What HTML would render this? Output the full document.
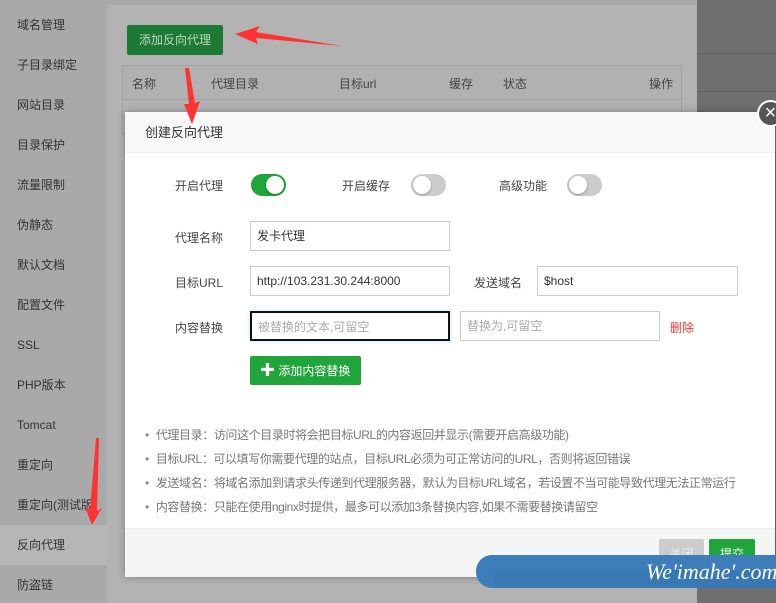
<!DOCTYPE html>
<html><head><meta charset="utf-8"><style>
*{margin:0;padding:0;box-sizing:border-box}
body{width:776px;height:603px;overflow:hidden;position:relative;background:#b3b3b3;font-family:"Liberation Sans","Noto Sans CJK SC",sans-serif;font-size:12px;color:#333}
.side{position:absolute;left:0;top:0;width:107px;height:603px;background:#a9a9a9}
.side div{position:absolute;left:17px;font-size:12px;color:#333;line-height:16px}
.side .act{left:0;width:107px;height:40px;background:#b6b6b6;padding-left:17px;line-height:40px}
.main{position:absolute;left:107px;top:0;width:590px;height:603px;background:#b3b3b3;border-top:5px solid #aaa}
.right{position:absolute;left:697px;top:0;width:79px;height:603px;background:#6f6f6f}
.right i{position:absolute;left:0;width:79px;height:1px;background:#626262}
.addbtn{position:absolute;left:127px;top:25px;height:30px;background:#1d7a34;color:#b9d9bf;border-radius:2px;font-size:12px;line-height:30px;text-align:center;width:96px}
.tbl{position:absolute;left:122px;top:65px;width:560px;height:70px;border:1px solid #a3a3a3}
.tbl .h{height:34px;border-bottom:1px solid #a3a3a3;position:relative;background:#b1b1b1}
.tbl .h span{position:absolute;top:9px;color:#444}
.modal{position:absolute;left:125px;top:112px;width:650px;height:465px;background:#fff;box-shadow:0 0 8px rgba(0,0,0,.3)}
.mh{height:41px;background:#f8f8f8;border-bottom:1px solid #eee;padding-left:20px;line-height:41px;font-size:13px;color:#333}
.mf{position:absolute;left:0;top:416px;width:650px;height:49px;background:#f4f5f5;border-top:1px solid #eee}
.lbl{position:absolute;font-size:12px;color:#444}
.sw{position:absolute;width:35px;height:22px;border-radius:11px;background:#ccc}
.sw:after{content:"";position:absolute;top:2px;left:2px;width:18px;height:18px;border-radius:50%;background:#fff;box-shadow:0 1px 2px rgba(0,0,0,.3)}
.sw.on{background:#20a53a}.sw.on:after{left:15px}
.in{position:absolute;height:30px;border:1px solid #ccc;padding-left:6px;line-height:28px;font-size:12px;color:#333}
.ph{color:#aaa}
.close{position:absolute;left:757px;top:100px;width:27px;height:27px;border-radius:50%;background:#555;border:2px solid #fff;color:#fff;font-size:20px;line-height:22px;text-align:center}
.notes{position:absolute;left:20px;top:311px;font-size:12px;color:#777;line-height:24px;letter-spacing:-0.4px}
.notes div:before{content:"•";color:#888;margin-right:7px}
.wm{position:absolute;left:476px;top:555px;width:300px;height:33px;background:#3c7dba;border-radius:16px 0 0 16px}
.wm2{position:absolute;left:495px;top:570px;width:281px;height:18px;background:#3878b4}
.wmt{position:absolute;left:646px;top:559px;color:#fff;font-family:"Liberation Serif",serif;font-style:italic;font-size:22px}
.arrow{position:absolute}
</style></head><body>
<div class="side">
<div style="top:17px">域名管理</div>
<div style="top:57px">子目录绑定</div>
<div style="top:97px">网站目录</div>
<div style="top:137px">目录保护</div>
<div style="top:177px">流量限制</div>
<div style="top:217px">伪静态</div>
<div style="top:257px">默认文档</div>
<div style="top:297px">配置文件</div>
<div style="top:337px">SSL</div>
<div style="top:377px">PHP版本</div>
<div style="top:417px">Tomcat</div>
<div style="top:457px">重定向</div>
<div style="top:497px">重定向(测试版</div>
<div class="act" style="top:525px">反向代理</div>
<div style="top:577px">防盗链</div>
</div>
<div class="main"></div>
<div class="right"><i style="top:53px"></i><i style="top:91px"></i></div>
<div class="addbtn">添加反向代理</div>
<div class="tbl"><div class="h">
<span style="left:9px">名称</span><span style="left:88px">代理目录</span><span style="left:216px">目标url</span><span style="left:326px">缓存</span><span style="left:380px">状态</span><span style="left:526px">操作</span></div></div>
<div class="modal">
<div class="mh">创建反向代理</div>
<span class="lbl" style="left:50px;top:65px">开启代理</span><div class="sw on" style="left:126px;top:62px"></div>
<span class="lbl" style="left:217px;top:65px">开启缓存</span><div class="sw" style="left:286px;top:62px"></div>
<span class="lbl" style="left:374px;top:65px">高级功能</span><div class="sw" style="left:442px;top:62px"></div>
<span class="lbl" style="left:50px;top:117px">代理名称</span><div class="in" style="left:125px;top:109px;width:200px">发卡代理</div>
<span class="lbl" style="left:50px;top:162px">目标URL</span><div class="in" style="left:125px;top:154px;width:200px">http://103.231.30.244:8000</div>
<span class="lbl" style="left:349px;top:162px">发送域名</span><div class="in" style="left:412px;top:154px;width:201px">$host</div>
<span class="lbl" style="left:50px;top:207px">内容替换</span><div class="in ph" style="left:125px;top:199px;width:200px;border:2px solid #111;box-shadow:0 0 4px #bfe0ff">被替换的文本,可留空</div>
<div class="in ph" style="left:335px;top:199px;width:200px">替换为,可留空</div>
<span class="lbl" style="left:545px;top:207px;color:#e53935">删除</span>
<div style="position:absolute;left:125px;top:244px;width:111px;height:29px;background:#20a53a;border-radius:2px;color:#fff;font-size:12px;line-height:29px;padding-left:10px"><b style="font-size:15px">✚</b> 添加内容替换</div>
<div class="notes">
<div>代理目录：访问这个目录时将会把目标URL的内容返回并显示(需要开启高级功能)</div>
<div>目标URL：可以填写你需要代理的站点，目标URL必须为可正常访问的URL，否则将返回错误</div>
<div>发送域名：将域名添加到请求头传递到代理服务器，默认为目标URL域名，若设置不当可能导致代理无法正常运行</div>
<div>内容替换：只能在使用nginx时提供，最多可以添加3条替换内容,如果不需要替换请留空</div>
</div>
<div class="mf">
<div style="position:absolute;left:534px;top:10px;width:45px;height:30px;background:#ccc;border-radius:2px;color:#eee;text-align:center;line-height:30px">关闭</div>
<div style="position:absolute;left:584px;top:10px;width:46px;height:30px;background:#20a53a;border-radius:2px;color:#fff;text-align:center;line-height:30px">提交</div>
</div>
</div>
<div class="close">×</div>
<div class="wm"></div><div class="wm2"></div>
<div class="wmt">We'imahe'.com</div>
<svg class="arrow" style="left:0;top:0" width="776" height="603">
<polygon points="235,34 260,26 256,32 342,46 256,38 258,44" fill="#f33"/>
<polygon points="185,68 189,68 195,103 200,101 192,124 184,104 189,104" fill="#f33"/>
<polygon points="96,438 99,438 97,511 102,508 92,525 85,507 90,510" fill="#f33"/>
</svg>
</body></html>
